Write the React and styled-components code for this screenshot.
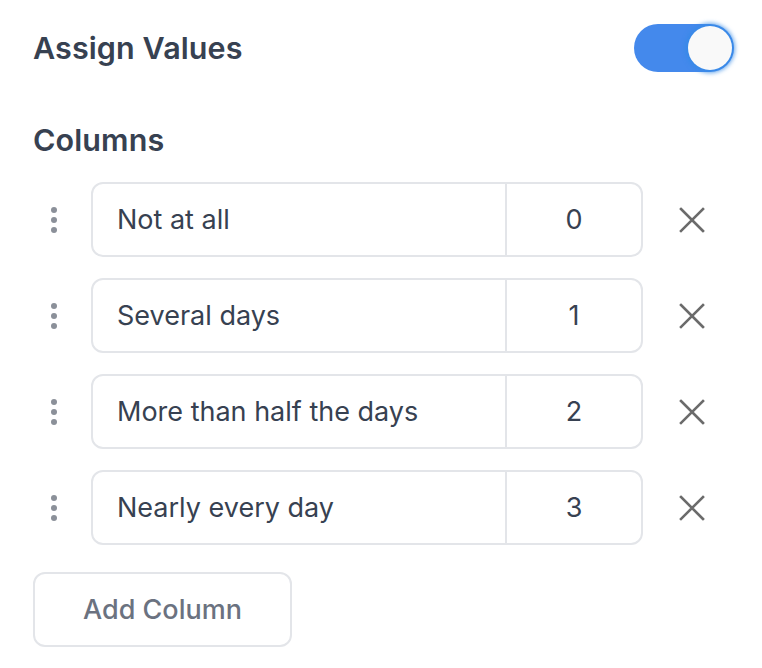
import React from "react";
import styled, { createGlobalStyle } from "styled-components";

const Global = createGlobalStyle`
  html, body { margin: 0; padding: 0; background: #ffffff; }
  body { font-family: Inter, "Noto Sans", sans-serif; -webkit-font-smoothing: antialiased; }
`;

const Page = styled.div`
  width: 762px;
  box-sizing: border-box;
  padding: 24px 28px 0 33px;
`;

const HeaderRow = styled.div`
  display: flex;
  align-items: center;
  justify-content: space-between;
  height: 48px;
`;

const Title = styled.h2`
  margin: 0;
  font-size: 30.5px;
  line-height: 36px;
  font-weight: 600;
  color: #374151;
  letter-spacing: 0.1px;
`;

const Toggle = styled.div`
  position: relative;
  width: 100px;
  height: 48px;
  border-radius: 24px;
  background: #4489ec;
  flex: 0 0 auto;
`;

const Knob = styled.span`
  position: absolute;
  top: 2px;
  right: 2px;
  width: 44px;
  height: 44px;
  border-radius: 50%;
  background: #f9f9f9;
  box-shadow: 0 0 4px 3px rgba(52, 137, 230, 0.75);
`;

const SectionTitle = styled(Title)`
  margin-top: 50px;
`;

const List = styled.div`
  display: flex;
  flex-direction: column;
  gap: 21px;
  margin-top: 24px;
`;

const Row = styled.div`
  display: flex;
  align-items: center;
  gap: 16px;
`;

const Handle = styled.div`
  width: 42px;
  display: flex;
  flex-direction: column;
  align-items: center;
  gap: 4px;
`;

const Dot = styled.span`
  width: 6px;
  height: 6px;
  border-radius: 50%;
  background: #8b9099;
`;

const Group = styled.div`
  display: flex;
  width: 552px;
  height: 75px;
  box-sizing: border-box;
  border: 2px solid #e3e5e9;
  border-radius: 12px;
  overflow: hidden;
`;

const Cell = styled.div`
  display: flex;
  align-items: center;
  box-sizing: border-box;
  font-size: 27px;
  color: #374151;
  ${(p) =>
    p.$value
      ? `width: 136px; justify-content: center; border-left: 2px solid #e3e5e9;`
      : `flex: 1; padding-left: 24px;`}
`;

const Remove = styled.button`
  width: 66px;
  height: 48px;
  display: flex;
  align-items: center;
  justify-content: center;
  background: none;
  border: none;
  padding: 0;
  color: #6b6b6b;
`;

const AddButton = styled.button`
  margin-top: 27px;
  width: 259px;
  height: 75px;
  box-sizing: border-box;
  border: 2px solid #e3e5e9;
  border-radius: 12px;
  background: #fff;
  font-family: Inter, "Noto Sans", sans-serif;
  font-size: 27px;
  font-weight: 500;
  color: #6b7280;
`;

const rows = [
  ["Not at all", 0],
  ["Several days", 1],
  ["More than half the days", 2],
  ["Nearly every day", 3],
];

const XIcon = () => (
  <svg width="26" height="26" viewBox="0 0 26 26" fill="none">
    <path d="M2 2 L24 24 M24 2 L2 24" stroke="currentColor" strokeWidth="2.6" strokeLinecap="square" />
  </svg>
);

export default function App() {
  return (
    <Page>
      <Global />
      <HeaderRow>
        <Title>Assign Values</Title>
        <Toggle>
          <Knob />
        </Toggle>
      </HeaderRow>
      <SectionTitle>Columns</SectionTitle>
      <List>
        {rows.map(([label, val]) => (
          <Row key={label}>
            <Handle>
              <Dot />
              <Dot />
              <Dot />
            </Handle>
            <Group>
              <Cell>{label}</Cell>
              <Cell $value>{val}</Cell>
            </Group>
            <Remove>
              <XIcon />
            </Remove>
          </Row>
        ))}
      </List>
      <AddButton>Add Column</AddButton>
    </Page>
  );
}
